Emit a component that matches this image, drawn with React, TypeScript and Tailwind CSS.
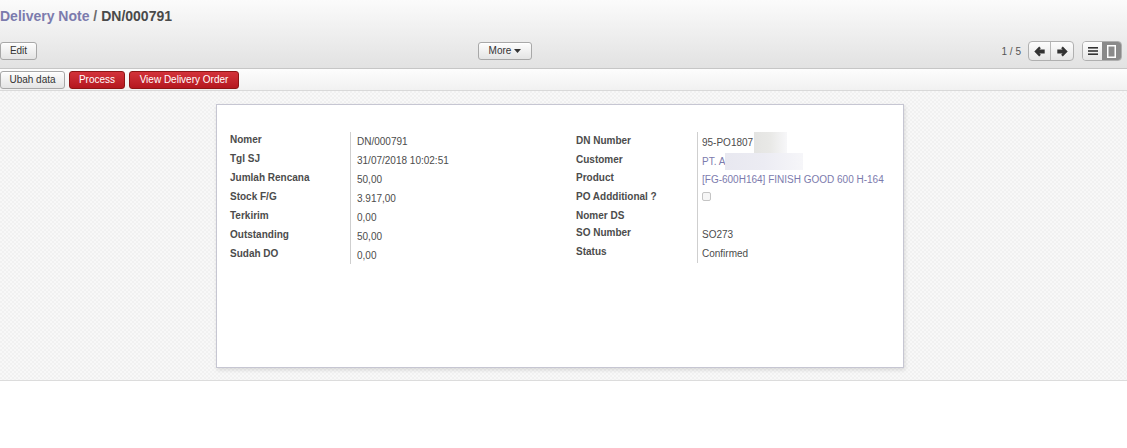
import React from 'react';

const leftFields = [
  { label: 'Nomer', value: 'DN/000791' },
  { label: 'Tgl SJ', value: '31/07/2018 10:02:51' },
  { label: 'Jumlah Rencana', value: '50,00' },
  { label: 'Stock F/G', value: '3.917,00' },
  { label: 'Terkirim', value: '0,00' },
  { label: 'Outstanding', value: '50,00' },
  { label: 'Sudah DO', value: '0,00' },
];

const btn =
  'h-[18px] whitespace-nowrap rounded-[3px] border border-[#a8a8a8] bg-gradient-to-b from-[#fdfdfd] to-[#e4e4e4] text-[10px] leading-[16px] text-[#333] shadow-[inset_0_1px_0_#fff]';
const redBtn =
  'h-[18px] whitespace-nowrap rounded-[3px] border border-[#8e1515] bg-gradient-to-b from-[#d3323a] to-[#b5171f] text-[10px] leading-[16px] text-white';

function ArrowIcon({ dir }: { dir: 'left' | 'right' }) {
  return (
    <svg width="11" height="11" viewBox="0 0 11 11" className={dir === 'right' ? 'scale-x-[-1]' : ''}>
      <path d="M0.3 5.5 L5.2 0.6 L6.9 2.3 L5.4 3.6 L10.7 3.6 L10.7 7.4 L5.4 7.4 L6.9 8.7 L5.2 10.4 Z" fill="#333" />
    </svg>
  );
}

function Label({ children }: { children: React.ReactNode }) {
  return <div className="w-[120px] shrink-0 font-bold text-[#4c4c4c] leading-[13px] pt-[1px]">{children}</div>;
}

export default function App() {
  return (
    <div className="w-[1127px] h-[448px] bg-white text-[10px] text-[#4c4c4c] overflow-hidden" style={{ fontFamily: '"Liberation Sans", Arial, sans-serif' }}>
      {/* control panel */}
      <div className="h-[69px] bg-gradient-to-b from-[#fbfbfb] to-[#e2e2e2] border-b border-[#c6c6c6]">
        <div className="pt-[7px] h-[32px] text-[14px] leading-[18px] font-bold">
          <span className="text-[#7c7bad]">Delivery Note</span>
          <span className="text-[#6b6b6b]"> / </span>
          <span className="text-[#4a4a4a]">DN/000791</span>
        </div>
        <div className="flex items-center h-[36px] pt-[2px]">
          <div className="w-[478px]">
            <button className={`${btn} w-[37px]`}>Edit</button>
          </div>
          <button className={`${btn} w-[54px] flex items-center justify-center gap-[3px]`}>
            <span>More</span>
            <svg width="7" height="4" viewBox="0 0 7 4">
              <path d="M0 0 L7 0 L3.5 4 Z" fill="#333" />
            </svg>
          </button>
          <div className="ml-auto flex items-center pr-[5px]">
            <span className="text-[10px] text-[#555] mr-[7px]">1 / 5</span>
            <div className="flex h-[20px] rounded-[4px] border border-[#b0b0b0] bg-gradient-to-b from-[#fdfdfd] to-[#e6e6e6] overflow-hidden">
              <div className="w-[22px] flex items-center justify-center border-r border-[#b8b8b8]">
                <ArrowIcon dir="left" />
              </div>
              <div className="w-[22px] flex items-center justify-center">
                <ArrowIcon dir="right" />
              </div>
            </div>
            <div className="ml-[8px] flex h-[20px] rounded-[4px] border border-[#b0b0b0] overflow-hidden">
              <div className="w-[19px] flex items-center justify-center bg-gradient-to-b from-[#fdfdfd] to-[#e6e6e6]">
                <svg width="10" height="8" viewBox="0 0 10 8">
                  <rect x="0" y="0" width="10" height="1.6" fill="#333" />
                  <rect x="0" y="3.2" width="10" height="1.6" fill="#333" />
                  <rect x="0" y="6.4" width="10" height="1.6" fill="#333" />
                </svg>
              </div>
              <div className="w-[19px] flex items-center justify-center bg-[#8a8a8a]">
                <svg width="9" height="13" viewBox="0 0 9 13">
                  <rect x="0.75" y="0.75" width="7.5" height="11.5" fill="none" stroke="#fff" strokeWidth="1.5" />
                </svg>
              </div>
            </div>
          </div>
        </div>
      </div>

      {/* statusbar */}
      <div className="h-[22px] flex items-center gap-[4px] bg-gradient-to-b from-[#fdfdfd] to-[#f1f1f1] border-b border-[#d9d9d9]">
        <button className={`${btn} w-[65px]`}>Ubah data</button>
        <button className={`${redBtn} w-[56px]`}>Process</button>
        <button className={`${redBtn} w-[110px]`}>View Delivery Order</button>
      </div>

      {/* sheet background */}
      <div className="h-[290px] pt-[13px] border-b border-[#dcdcdc] bg-[conic-gradient(#f1f1f1_25%,#f8f8f8_0_50%,#f1f1f1_0_75%,#f8f8f8_0)] bg-[length:4px_4px]">
        <div className="ml-[216px] w-[688px] h-[264px] bg-white border border-[#c6c6d2] shadow-[1px_2px_4px_rgba(0,0,0,0.12)] pl-[13px] pt-[27px]">
          <div className="grid grid-cols-[346px_346px]">
            {/* left group */}
            <div className="relative">
              <div className="absolute left-[120px] top-0 h-[132px] border-l border-[#cfcfcf]" />
              {leftFields.map((f) => (
                <div key={f.label} className="flex h-[19px]">
                  <Label>{f.label}</Label>
                  <div className="pl-[7px] pt-[3px] leading-[13px]">{f.value}</div>
                </div>
              ))}
            </div>
            {/* right group */}
            <div className="relative">
              <div className="absolute left-[121px] top-0 h-[131px] border-l border-[#cfcfcf]" />
              <div className="flex h-[19px] pt-[1px]">
                <Label>DN Number</Label>
                <div className="pl-[6px] pt-[3px] leading-[13px] flex items-start">
                  <span>95-PO1807</span>
                  <span className="ml-[1px] -mt-[4px] w-[33px] h-[21px] bg-gradient-to-r from-[#e4e4e2] via-[#e9e9e7] to-[#f7f7f9]" />
                </div>
              </div>
              <div className="flex h-[19px] pt-[1px]">
                <Label>Customer</Label>
                <div className="pl-[6px] pt-[3px] leading-[13px] flex items-start text-[#7c7bad]">
                  <span>PT. A</span>
                  <span className="-mt-[2px] w-[78px] h-[17px] bg-gradient-to-r from-[#e8e8f0] via-[#ececf3] to-[#f6f6f9]" />
                </div>
              </div>
              <div className="flex h-[19px]">
                <Label>Product</Label>
                <div className="pl-[6px] pt-[3px] leading-[13px] text-[#7c7bad]">[FG-600H164] FINISH GOOD 600 H-164</div>
              </div>
              <div className="flex h-[19px]">
                <Label>PO Addditional ?</Label>
                <div className="pl-[6px] pt-[3px]">
                  <div className="w-[9px] h-[9px] rounded-[2px] border border-[#c4c4c4] bg-[#f6f6f6]" />
                </div>
              </div>
              <div className="flex h-[16px]">
                <Label>Nomer DS</Label>
              </div>
              <div className="flex h-[20px] pt-[1px]">
                <Label>SO Number</Label>
                <div className="pl-[6px] pt-[3px] leading-[13px]">SO273</div>
              </div>
              <div className="flex h-[19px]">
                <Label>Status</Label>
                <div className="pl-[6px] pt-[3px] leading-[13px]">Confirmed</div>
              </div>
            </div>
          </div>
        </div>
      </div>
    </div>
  );
}
